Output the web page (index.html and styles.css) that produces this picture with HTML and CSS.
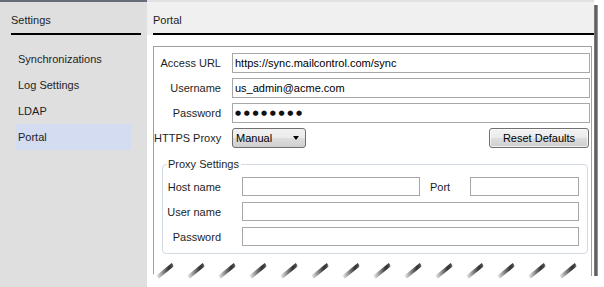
FILE: index.html
```html
<!DOCTYPE html>
<html lang="en">
<head>
    <meta charset="UTF-8">
    <title>Settings - Portal</title>
    <link rel="stylesheet" href="styles.css">
</head>
<body>
    <div class="screen">
        <div class="window">
            <aside class="sidebar">
                <div class="side-head">Settings</div>
                <ul class="nav">
                    <li>Synchronizations</li>
                    <li>Log Settings</li>
                    <li>LDAP</li>
                    <li class="active">Portal</li>
                </ul>
            </aside>

            <main class="panel">
                <div class="panel-top">
                    <div class="panel-head">Portal</div>
                </div>

                <div class="panel-body">
                    <form class="portal-form">
                        <label for="url">Access URL</label>
                        <input class="field" type="text" id="url" value="https://sync.mailcontrol.com/sync">

                        <label for="user">Username</label>
                        <input class="field" type="text" id="user" value="us_admin@acme.com">

                        <label for="pass">Password</label>
                        <input class="field pw" type="text" id="pass" value="●●●●●●●●">

                        <label>HTTPS Proxy</label>
                        <div class="proxy-row">
                            <div class="combo">Manual<span class="arrow"></span></div>
                            <button type="button" class="btn">Reset Defaults</button>
                        </div>
                    </form>

                    <fieldset class="proxy">
                        <legend>Proxy Settings</legend>
                        <div class="proxy-grid">
                            <label for="host">Host name</label>
                            <input class="field" type="text" id="host">
                            <label for="port" class="port-label">Port</label>
                            <input class="field" type="text" id="port">

                            <label for="puser">User name</label>
                            <input class="field wide" type="text" id="puser">

                            <label for="ppass">Password</label>
                            <input class="field wide" type="text" id="ppass">
                        </div>
                    </fieldset>
                </div>
            </main>
        </div>
        <div class="edge-shadow"></div>

        <!-- torn paper edge -->
        <svg class="tear" width="447" height="32" viewBox="0 0 447 32">
            <defs>
                <linearGradient id="tearShade" gradientUnits="userSpaceOnUse" x1="10" y1="0" x2="41" y2="0" spreadMethod="repeat">
                    <stop offset="0" stop-color="#e8e8e8"/>
                    <stop offset="0.15" stop-color="#a0a0a0"/>
                    <stop offset="0.38" stop-color="#333"/>
                    <stop offset="0.49" stop-color="#4a4a4a"/>
                    <stop offset="0.55" stop-color="#fff"/>
                    <stop offset="1" stop-color="#e8e8e8"/>
                </linearGradient>
            </defs>
            <polygon fill="#fff" points="0,18 10,20 25,8 41,20 56,8 72,20 87,8 103,20 118,8 134,20 149,8 165,20 180,8 196,20 211,8 227,20 242,8 258,20 273,8 289,20 304,8 320,20 335,8 351,20 366,8 382,20 397,8 413,20 428,8 444,21 447,21 447,32 0,32"/>
            <path fill="none" stroke="url(#tearShade)" stroke-width="4" d="M10.5,22 L26,9.5 M41.5,22 L57,9.5 M72.5,22 L88,9.5 M103.5,22 L119,9.5 M134.5,22 L150,9.5 M165.5,22 L181,9.5 M196.5,22 L212,9.5 M227.5,22 L243,9.5 M258.5,22 L274,9.5 M289.5,22 L305,9.5 M320.5,22 L336,9.5 M351.5,22 L367,9.5 M382.5,22 L398,9.5 M413.5,22 L429,9.5"/>
        </svg>
    </div>
</body>
</html>
```

FILE: styles.css
```css
* {
    margin: 0;
    padding: 0;
    box-sizing: border-box;
}

body {
    font-family: "Liberation Sans", Arial, sans-serif;
    font-size: 11px;
    color: #1e1e1e;
    background: #fff;
    width: 604px;
    height: 287px;
    overflow: hidden;
}

.screen {
    position: relative;
    display: flex;
    height: 287px;
}

.window {
    display: flex;
    width: 594px;
    height: 287px;
    flex-shrink: 0;
}

/* left navigation */
.sidebar {
    width: 147px;
    flex-shrink: 0;
    background: #dfdfdf;
    border-top: 2px solid #666d7a;
}

.side-head {
    margin: 0 6px 0 11px;
    padding: 11px 0 6px;
    line-height: 14px;
    border-bottom: 2px solid #000;
}

.nav {
    list-style: none;
    margin-top: 11px;
}

.nav li {
    margin-left: 16px;
    width: 115px;
    height: 26px;
    line-height: 26px;
    padding-left: 2px;
}

.nav li.active {
    background: #d3dcf0;
}

/* right panel */
.panel {
    flex: 1;
    min-width: 0;
    display: flex;
    flex-direction: column;
    background: #fff;
}

.panel-top {
    background: #f0f0f0;
    padding-left: 6px;
    border-top: 2px solid #e2e2e2;
}

.panel-head {
    padding: 11px 0 6px;
    line-height: 14px;
    border-bottom: 2px solid #000;
}

.panel-body {
    flex: 1;
    margin: 11px 2px 0 6px;
    border: 1px solid #a0a0a0;
    border-bottom: none;
    padding: 6px 1px 0 0;
}

.portal-form {
    display: grid;
    grid-template-columns: 78px minmax(0, 1fr);
    row-gap: 5px;
    align-items: center;
}

.portal-form label,
.proxy-grid label {
    text-align: right;
    padding-right: 11px;
    line-height: 14px;
    white-space: nowrap;
}

.field {
    width: 100%;
    min-width: 0;
    height: 20px;
    border: 1px solid #a7a7a7;
    padding: 0 2px;
    font-family: inherit;
    font-size: 11px;
    color: #000;
    background: #fff;
    outline: none;
}

.field.pw {
    font-family: "DejaVu Sans", sans-serif;
    font-size: 7px;
    letter-spacing: 2.6px;
    color: #111;
}

.proxy-row {
    display: flex;
    justify-content: space-between;
    align-items: center;
}

.combo {
    width: 74px;
    height: 20px;
    border: 1px solid #707070;
    border-radius: 3px;
    background: linear-gradient(#f2f2f2, #ebebeb 50%, #dddddd 50%, #cfcfcf);
    display: flex;
    align-items: center;
    justify-content: space-between;
    padding: 0 6px 0 3px;
    color: #000;
}

.arrow {
    width: 0;
    height: 0;
    border-left: 3.5px solid transparent;
    border-right: 3.5px solid transparent;
    border-top: 4px solid #000;
}

.btn {
    width: 100px;
    height: 20px;
    margin-right: 1px;
    border: 1px solid #707070;
    border-radius: 3px;
    background: linear-gradient(#f2f2f2, #ebebeb 50%, #dddddd 50%, #cfcfcf);
    box-shadow: inset 0 0 0 1px rgba(255, 255, 255, 0.7);
    font-family: inherit;
    font-size: 11px;
    color: #000;
}

/* proxy group box */
.proxy {
    min-width: 0;
    margin: 9px 2px 0 8px;
    border: 1px solid #d3dae2;
    border-radius: 4px;
    padding: 6px 8px 7px 4px;
}

.proxy legend {
    padding: 0 2px 0 1px;
    line-height: 14px;
}

.proxy-grid {
    display: grid;
    grid-template-columns: 75px 178px 50px minmax(0, 1fr);
    row-gap: 6px;
    align-items: center;
}

.proxy-grid label {
    padding-right: 21px;
}

.proxy-grid .port-label {
    text-align: left;
    padding: 0 0 0 10px;
}

.proxy-grid .field {
    height: 19px;
}

.proxy-grid .wide {
    grid-column: 2 / 5;
}

/* screenshot decoration */
.edge-shadow {
    width: 4px;
    flex-shrink: 0;
    margin: 5px 0 11px;
    background: linear-gradient(to right, #8c8c8c, #4e4e4e 50%, #a8a8a8);
}

.tear {
    position: absolute;
    left: 147px;
    top: 255px;
}
```
